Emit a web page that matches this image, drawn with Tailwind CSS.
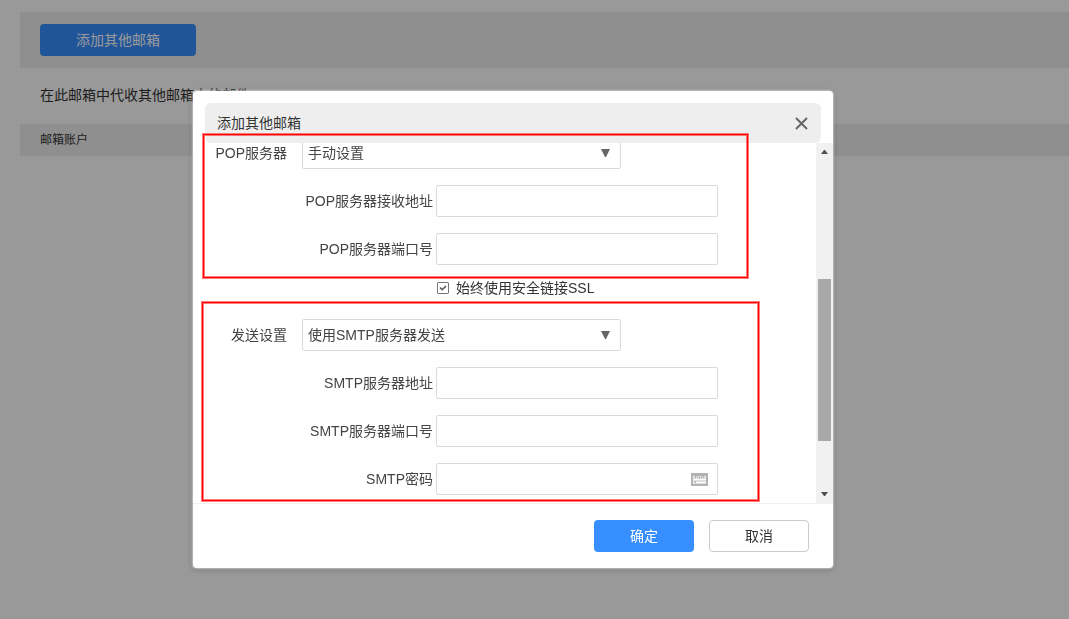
<!DOCTYPE html>
<html lang="zh-CN">
<head>
    <meta charset="UTF-8">
    <meta name="viewport" content="width=device-width, initial-scale=1.0">
    <title>添加其他邮箱</title>
    <script src="https://cdn.jsdelivr.net/npm/@tailwindcss/browser@4"></script>
</head>
<body class="bg-white font-['Liberation_Sans','Noto_Sans_CJK_SC',sans-serif] text-sm text-[#333]">

    <!-- mailbox settings page -->
    <main class="pl-5 pt-3">
        <div class="bg-[#eee] px-5 py-3">
            <button type="button" class="block w-[156px] h-8 rounded bg-[#378eff] text-white">添加其他邮箱</button>
        </div>
        <p class="h-14 px-5 leading-[54px]">在此邮箱中代收其他邮箱中的邮件</p>
        <div class="bg-[#eee] h-8 px-5 text-xs leading-8">邮箱账户</div>
    </main>

    <!-- mask + dialog -->
    <div class="fixed inset-0 bg-black/40 pl-[193px] pt-[91px]">
        <div role="dialog" aria-labelledby="dialog-title" class="relative w-[640px] rounded bg-white shadow-[0_0_2px_1px_#ffffff80,0_1px_5px_1px_#00000040]">
            <div class="px-3 pt-3">
                <div class="flex h-10 items-center justify-between rounded-md bg-[#eee] px-3">
                    <h2 id="dialog-title">添加其他邮箱</h2>
                    <button type="button" aria-label="关闭" class="p-px">
                        <svg class="block" width="14" height="14" viewBox="0 0 14 14" fill="none" stroke="#666" stroke-width="2"><path d="M2 2l11 11M13 2l-11 11"/></svg>
                    </button>
                </div>
            </div>

            <div class="flex h-[360px] overflow-hidden">
                <form class="-mt-1.5 flex flex-1 flex-col gap-4 text-[#444]">
                    <div class="flex h-8 shrink-0 items-center gap-[15px]">
                        <label for="pop-server" class="w-[94px] text-right">POP服务器</label>
                        <div class="relative">
                            <select id="pop-server" class="block h-8 w-[319px] appearance-none rounded-xs border border-[#d9d9d9] bg-white pl-[5px]">
                                <option>手动设置</option>
                            </select>
                            <svg class="pointer-events-none absolute right-[11px] top-3" width="9" height="8" viewBox="0 0 9 8" fill="#666"><path d="M0 0h9L5 8H4z"/></svg>
                        </div>
                    </div>
                    <div class="flex h-8 shrink-0 items-center gap-[3px]">
                        <label for="pop-host" class="w-60 text-right">POP服务器接收地址</label>
                        <input id="pop-host" type="text" class="h-8 w-[282px] rounded-xs border border-[#d9d9d9] px-2">
                    </div>
                    <div class="flex h-8 shrink-0 items-center gap-[3px]">
                        <label for="pop-port" class="w-60 text-right">POP服务器端口号</label>
                        <input id="pop-port" type="text" class="h-8 w-[282px] rounded-xs border border-[#d9d9d9] px-2">
                    </div>
                    <div class="mb-2 flex h-[14px] shrink-0 items-center pl-[244px]">
                        <label class="flex items-center gap-[7px] text-[#333]">
                            <span class="relative block size-3">
                                <input type="checkbox" checked class="block size-3 appearance-none rounded-[1px] border border-[#777] bg-white">
                                <svg class="pointer-events-none absolute inset-0" width="12" height="12" viewBox="0 0 12 12" fill="none" stroke="#555" stroke-width="1.600"><path d="M3 5.500l2.200 2.200L9 4"/></svg>
                            </span>
                            始终使用安全链接SSL
                        </label>
                    </div>
                    <div class="flex h-8 shrink-0 items-center gap-[15px]">
                        <label for="send-mode" class="w-[94px] text-right">发送设置</label>
                        <div class="relative">
                            <select id="send-mode" class="block h-8 w-[319px] appearance-none rounded-xs border border-[#d9d9d9] bg-white pl-[5px]">
                                <option>使用SMTP服务器发送</option>
                            </select>
                            <svg class="pointer-events-none absolute right-[11px] top-3" width="9" height="8" viewBox="0 0 9 8" fill="#666"><path d="M0 0h9L5 8H4z"/></svg>
                        </div>
                    </div>
                    <div class="flex h-8 shrink-0 items-center gap-[3px]">
                        <label for="smtp-host" class="w-60 text-right">SMTP服务器地址</label>
                        <input id="smtp-host" type="text" class="h-8 w-[282px] rounded-xs border border-[#d9d9d9] px-2">
                    </div>
                    <div class="flex h-8 shrink-0 items-center gap-[3px]">
                        <label for="smtp-port" class="w-60 text-right">SMTP服务器端口号</label>
                        <input id="smtp-port" type="text" class="h-8 w-[282px] rounded-xs border border-[#d9d9d9] px-2">
                    </div>
                    <div class="flex h-8 shrink-0 items-center gap-[3px]">
                        <label for="smtp-pass" class="w-60 text-right">SMTP密码</label>
                        <div class="relative">
                            <input id="smtp-pass" type="password" class="block h-8 w-[282px] rounded-xs border border-[#d9d9d9] pl-2 pr-8">
                            <svg class="absolute right-[10px] top-[10px]" width="17" height="13" viewBox="0 0 17 13" shape-rendering="crispEdges">
                                <rect width="17" height="13" fill="#b3b3b3"/>
                                <path fill="#dedede" d="M2 3h13v8h-13z"/>
                                <path fill="#b3b3b3" d="M4 3h1v2h-1zM6 3h1v1h-1zM8 4h1v2h-1zM10 3h1v2h-1zM12 3h1v2h-1zM4 8h1v2h-1z"/>
                                <path fill="#fff" d="M2 6h13v1h-13zM2 3h1v1h-1zM14 3h1v1h-1zM5 9h10v1h-10zM2 9h1v1h-1z"/>
                            </svg>
                        </div>
                    </div>
                </form>

                <!-- scroll bar -->
                <div class="flex w-[17px] flex-col items-center bg-[#f1f1f1]">
                    <svg width="17" height="17" viewBox="0 0 17 17" fill="#505050"><path d="M5 11l3-4h1l3 4z"/></svg>
                    <div class="mt-[119px] h-[162px] w-[13px] bg-[#a8a8a8]"></div>
                    <svg class="mt-auto" width="17" height="17" viewBox="0 0 17 17" fill="#505050"><path d="M5 6h7l-3 4h-1z"/></svg>
                </div>
            </div>

            <div class="flex justify-end gap-[15px] border-t border-[#f1f1f1] px-6 pb-4 pt-4">
                <button type="button" class="h-8 w-[100px] rounded bg-[#378eff] text-white">确定</button>
                <button type="button" class="h-8 w-[100px] rounded border border-[#ccc] bg-white">取消</button>
            </div>

            <!-- red marks round the two server groups -->
            <div class="pointer-events-none absolute left-[10px] top-[43px] h-[144px] w-[545px] border border-[#f00] shadow-[0_0_0_1px_#ff000080,inset_0_0_0_1px_#ff000080]"></div>
            <div class="pointer-events-none absolute left-[9px] top-[211px] h-[199px] w-[557px] border border-[#f00] shadow-[0_0_0_1px_#ff000080,inset_0_0_0_1px_#ff000080]"></div>
        </div>
    </div>

</body>
</html>
